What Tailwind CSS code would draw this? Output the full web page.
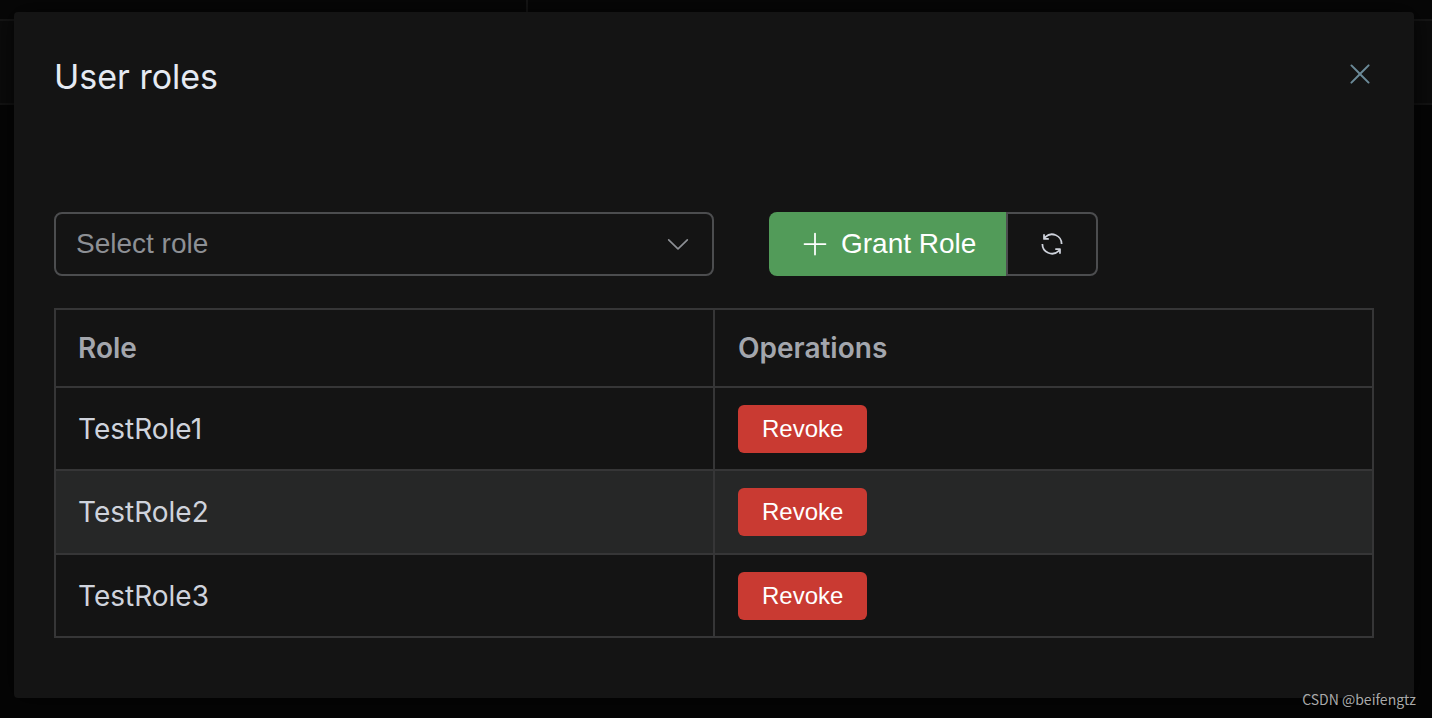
<!DOCTYPE html>
<html lang="en">
<head>
<meta charset="utf-8">
<title>User roles</title>
<script src="https://cdn.jsdelivr.net/npm/@tailwindcss/browser@4"></script>
</head>
<body class="relative isolate min-h-screen bg-[#050505] font-['Inter',sans-serif] text-[28px]">
  <!-- Dimmed page behind the dialog -->
  <div class="absolute inset-x-0 top-0 -z-10" aria-hidden="true">
    <div class="flex h-[21px] border-b-2 border-[#161616] bg-[#070707]">
      <div class="w-[528px] border-r-2 border-[#161616]"></div>
    </div>
    <div class="h-21 border-b-2 border-[#131313] bg-[#0b0b0b]"></div>
  </div>

  <div class="pt-3 pr-[18px] pb-5 pl-[14px]">
    <main role="dialog" aria-labelledby="title" class="rounded bg-[#141414] px-10 pt-10 pb-15 shadow-[0_0_24px_rgba(0,0,0,0.7)]">
      <header class="flex items-start justify-between">
        <h1 id="title" class="text-[34px] leading-[50px] text-[#e5eaf3]">User roles</h1>
        <button type="button" aria-label="Close" class="mt-1.5 -mr-0.5 text-[#6b8a98]">
          <svg class="block size-8" viewBox="0 0 1024 1024" fill="currentColor"><path d="M764.288 214.592 512 466.88 259.712 214.592a31.936 31.936 0 0 0-45.12 45.12L466.752 512 214.528 764.224a31.936 31.936 0 1 0 45.12 45.184L512 557.184l252.288 252.288a31.936 31.936 0 0 0 45.12-45.12L557.12 512.064l252.288-252.352a31.936 31.936 0 1 0-45.12-45.184z"/></svg>
        </button>
      </header>

      <div class="mt-[110px] grid grid-cols-2 font-['Liberation_Sans',sans-serif]">
        <div class="relative">
          <select aria-label="Select role" class="block h-16 w-full appearance-none rounded-lg border-2 border-[#4c4d4f] bg-transparent px-5 text-[#8d9095]">
            <option>Select role</option>
            <option>TestRole1</option>
            <option>TestRole2</option>
            <option>TestRole3</option>
          </select>
          <svg class="pointer-events-none absolute top-[18px] right-[22px] size-7 text-[#8d9095]" viewBox="0 0 1024 1024" fill="currentColor"><path d="M831.872 340.864 512 652.672 192.128 340.864a30.592 30.592 0 0 0-42.752 0 29.12 29.12 0 0 0 0 41.6L489.664 714.24a32 32 0 0 0 44.672 0l340.288-331.712a29.12 29.12 0 0 0 0-41.728 30.592 30.592 0 0 0-42.752 0z"/></svg>
        </div>
        <div class="flex pl-[55px]">
          <button type="button" class="flex h-16 items-center gap-3 rounded-l-lg bg-[#529b59] pr-[30px] pl-8 text-white">
            <svg class="size-7" viewBox="0 0 1024 1024" fill="currentColor"><path d="M480 480V128a32 32 0 0 1 64 0v352h352a32 32 0 1 1 0 64H544v352a32 32 0 1 1-64 0V544H128a32 32 0 0 1 0-64z"/></svg>
            Grant Role
          </button>
          <button type="button" aria-label="Refresh" class="flex h-16 items-center rounded-r-lg border-2 border-[#4c4d4f] px-[30px] text-[#cfd3dc]">
            <svg class="size-7" viewBox="0 0 1024 1024" fill="currentColor"><path d="M771.776 794.88A384 384 0 0 1 128 512h64a320 320 0 0 0 555.712 216.448H654.72a32 32 0 1 1 0-64h149.056a32 32 0 0 1 32 32v148.928a32 32 0 1 1-64 0v-50.56zM276.288 295.616h92.992a32 32 0 0 1 0 64H220.16a32 32 0 0 1-32-32V178.56a32 32 0 0 1 64 0v50.56A384 384 0 0 1 896.128 512h-64a320 320 0 0 0-555.776-216.384z"/></svg>
          </button>
        </div>
      </div>

      <table class="mt-8 w-full table-fixed border-collapse text-left text-[#cfd3dc]">
        <thead>
          <tr class="h-[78px] text-[#a3a6ad]">
            <th class="border-2 border-[#363637] px-[22px] font-semibold">Role</th>
            <th class="border-2 border-[#363637] px-[23px] font-semibold">Operations</th>
          </tr>
        </thead>
        <tbody>
          <tr class="h-[83px]">
            <td class="border-2 border-[#363637] px-[22px]">TestRole1</td>
            <td class="border-2 border-[#363637] px-[23px]"><button type="button" class="block h-12 rounded-md bg-[#c93a32] px-6 font-['Liberation_Sans',sans-serif] text-2xl text-white">Revoke</button></td>
          </tr>
          <tr class="h-[84px] bg-[#262727]">
            <td class="border-2 border-[#363637] px-[22px]">TestRole2</td>
            <td class="border-2 border-[#363637] px-[23px]"><button type="button" class="block h-12 rounded-md bg-[#c93a32] px-6 font-['Liberation_Sans',sans-serif] text-2xl text-white">Revoke</button></td>
          </tr>
          <tr class="h-[83px]">
            <td class="border-2 border-[#363637] px-[22px]">TestRole3</td>
            <td class="border-2 border-[#363637] px-[23px]"><button type="button" class="block h-12 rounded-md bg-[#c93a32] px-6 font-['Liberation_Sans',sans-serif] text-2xl text-white">Revoke</button></td>
          </tr>
        </tbody>
      </table>
    </main>
  </div>
  <p class="absolute right-4 bottom-[9px] font-['Noto_Sans_CJK_SC',sans-serif] text-[14px] leading-5 text-[#a9a9a9]">CSDN @beifengtz</p>
</body>
</html>
